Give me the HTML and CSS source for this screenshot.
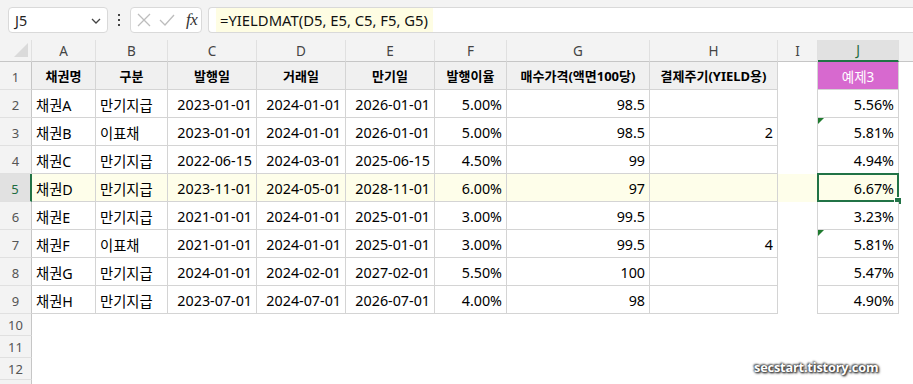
FILE: index.html
```html
<!DOCTYPE html>
<html lang="ko">
<head>
<meta charset="utf-8">
<title>YIELDMAT</title>
<link rel="stylesheet" href="styles.css">
</head>
<body>
<div class="app">
  <div class="fbar">
    <div class="namebox">
      <span>J5</span>
      <svg class="chev" width="10" height="6" viewBox="0 0 10 6"><path d="M1 1 L5 5 L9 1" fill="none" stroke="#444" stroke-width="1.3"/></svg>
    </div>
    <div class="dots"><i></i><i></i><i></i></div>
    <div class="fbtns">
      <svg width="14" height="14" viewBox="0 0 14 14"><path d="M1 1 L13 13 M13 1 L1 13" stroke="#bdbdbd" stroke-width="1.3" fill="none"/></svg>
      <svg width="16" height="12" viewBox="0 0 16 12"><path d="M1 6 L6 11 L15 1" stroke="#bdbdbd" stroke-width="1.3" fill="none"/></svg>
      <span class="fx">fx</span>
    </div>
    <div class="finput"><span class="ftext">=YIELDMAT(D5, E5, C5, F5, G5)</span></div>
  </div>

  <div class="sheet">
    <div class="corner"><svg width="14" height="14" viewBox="0 0 14 14"><path d="M14 0 L14 14 L0 14 Z" fill="#dadada"/></svg></div>
    <div class="ch">A</div><div class="ch">B</div><div class="ch">C</div><div class="ch">D</div><div class="ch">E</div><div class="ch">F</div><div class="ch">G</div><div class="ch">H</div><div class="ch">I</div><div class="ch sel">J</div><div class="ch last"></div>

    <div class="rh">1</div>
    <div class="c h">채권명</div><div class="c h">구분</div><div class="c h">발행일</div><div class="c h">거래일</div><div class="c h">만기일</div><div class="c h">발행이율</div><div class="c h">매수가격(액면100당)</div><div class="c h">결제주기(YIELD용)</div><div class="gap"></div><div class="c ex">예제3</div><div class="e"></div>

    <div class="rh">2</div>
    <div class="c">채권A</div><div class="c">만기지급</div><div class="c r">2023-01-01</div><div class="c r">2024-01-01</div><div class="c r">2026-01-01</div><div class="c r">5.00%</div><div class="c r">98.5</div><div class="c r"></div><div class="gap"></div><div class="c r">5.56%</div><div class="e"></div>

    <div class="rh">3</div>
    <div class="c">채권B</div><div class="c">이표채</div><div class="c r">2023-01-01</div><div class="c r">2024-01-01</div><div class="c r">2026-01-01</div><div class="c r">5.00%</div><div class="c r">98.5</div><div class="c r">2</div><div class="gap"></div><div class="c r tri">5.81%</div><div class="e"></div>

    <div class="rh">4</div>
    <div class="c">채권C</div><div class="c">만기지급</div><div class="c r">2022-06-15</div><div class="c r">2024-03-01</div><div class="c r">2025-06-15</div><div class="c r">4.50%</div><div class="c r">99</div><div class="c r"></div><div class="gap"></div><div class="c r">4.94%</div><div class="e"></div>

    <div class="rh sel">5</div>
    <div class="c y">채권D</div><div class="c y">만기지급</div><div class="c r y">2023-11-01</div><div class="c r y">2024-05-01</div><div class="c r y">2028-11-01</div><div class="c r y">6.00%</div><div class="c r y">97</div><div class="c r y"></div><div class="gap y"></div><div class="c r y active">6.67%</div><div class="e"></div>

    <div class="rh">6</div>
    <div class="c">채권E</div><div class="c">만기지급</div><div class="c r">2021-01-01</div><div class="c r">2024-01-01</div><div class="c r">2025-01-01</div><div class="c r">3.00%</div><div class="c r">99.5</div><div class="c r"></div><div class="gap"></div><div class="c r">3.23%</div><div class="e"></div>

    <div class="rh">7</div>
    <div class="c">채권F</div><div class="c">이표채</div><div class="c r">2021-01-01</div><div class="c r">2024-01-01</div><div class="c r">2025-01-01</div><div class="c r">3.00%</div><div class="c r">99.5</div><div class="c r">4</div><div class="gap"></div><div class="c r tri">5.81%</div><div class="e"></div>

    <div class="rh">8</div>
    <div class="c">채권G</div><div class="c">만기지급</div><div class="c r">2024-01-01</div><div class="c r">2024-02-01</div><div class="c r">2027-02-01</div><div class="c r">5.50%</div><div class="c r">100</div><div class="c r"></div><div class="gap"></div><div class="c r">5.47%</div><div class="e"></div>

    <div class="rh">9</div>
    <div class="c">채권H</div><div class="c">만기지급</div><div class="c r">2023-07-01</div><div class="c r">2024-07-01</div><div class="c r">2026-07-01</div><div class="c r">4.00%</div><div class="c r">98</div><div class="c r"></div><div class="gap"></div><div class="c r">4.90%</div><div class="e"></div>

    <div class="rh short">10</div><div class="blank"></div>
    <div class="rh short">11</div><div class="blank"></div>
    <div class="rh short">12</div><div class="blank"></div>
    <div class="rh short"></div><div class="blank"></div>
  </div>

  <div class="watermark">secstart.tistory.com</div>
</div>
</body>
</html>
```

FILE: styles.css
```css
* { box-sizing: border-box; }
html, body { margin: 0; padding: 0; }
body {
  width: 913px;
  height: 384px;
  overflow: hidden;
  background: #ffffff;
  font-family: "Noto Sans", "Noto Sans CJK KR", sans-serif;
  color: #000;
}
.app { position: relative; width: 913px; height: 384px; background: #f3f3f3; }

/* formula bar */
.fbar {
  height: 33px;
  padding: 7px 0 0 8px;
  display: flex;
  align-items: stretch;
}
.namebox {
  width: 100px;
  background: #fff;
  border: 1px solid #d9d9d9;
  border-radius: 4px;
  display: flex;
  align-items: center;
  justify-content: space-between;
  padding: 0 6px 0 6px;
  font-size: 14.3px;
  color: #222;
}
.chev { margin-top: 1px; }
.dots {
  width: 22px;
  display: flex;
  flex-direction: column;
  align-items: center;
  justify-content: center;
  gap: 3px;
}
.dots i { display: block; width: 2px; height: 2px; background: #444; }
.fbtns {
  width: 72px;
  background: #fff;
  border: 1px solid #d9d9d9;
  border-radius: 4px;
  display: flex;
  align-items: center;
  gap: 8px;
  padding-left: 6px;
}
.fx {
  font-family: "Liberation Serif", "DejaVu Serif", serif;
  font-style: italic;
  font-size: 17px;
  color: #333;
  margin-left: 3px;
  letter-spacing: -0.5px;
}
.finput {
  flex: 1;
  margin-left: 6px;
  background: #fff;
  border: 1px solid #d9d9d9;
  border-right: none;
  border-radius: 4px 0 0 4px;
  display: flex;
  align-items: stretch;
  padding-left: 7px;
}
.ftext {
  background: #fefde3;
  display: flex;
  align-items: center;
  padding: 0 5px 0 4px;
  font-size: 14.8px;
  color: #111;
}

/* sheet */
.sheet {
  margin-top: 7px;
  display: grid;
  grid-template-columns: 32px 64px 72px 89px 89px 89px 72px 143px 128px 40px 81px 1fr;
  grid-template-rows: 22px repeat(9, 28px) repeat(4, 22px);
}
.corner {
  background: #f3f3f3;
  border-right: 1px solid #e0e0e0;
  border-bottom: 1px solid #c6c6c6;
  display: flex;
  align-items: flex-end;
  justify-content: flex-end;
  padding: 0 3px 4px 0;
}
.ch {
  background: #f3f3f3;
  border-right: 1px solid #e0e0e0;
  border-bottom: 1px solid #c6c6c6;
  display: flex;
  align-items: center;
  justify-content: center;
  font-size: 13.5px;
  color: #444;
}
.ch.sel {
  background: #e1e1e1;
  color: #1d6b40;
  border-bottom: 2px solid #217346;
}
.ch.last { border-right: none; }
.rh {
  background: #f3f3f3;
  border-right: 1px solid #c6c6c6;
  border-bottom: 1px solid #e0e0e0;
  display: flex;
  align-items: flex-end;
  justify-content: center;
  padding-bottom: 3px;
  font-size: 13px;
  color: #555;
}
.rh.short { padding-bottom: 1px; }
.rh.sel {
  background: #e1e1e1;
  color: #1d6b40;
  border-right: 2px solid #217346;
}
.c {
  background: #fff;
  border-right: 1px solid #d4d4d4;
  border-bottom: 1px solid #d4d4d4;
  display: flex;
  align-items: center;
  padding: 1px 4px 0 4px;
  font-size: 14.3px;
  white-space: nowrap;
  position: relative;
}
.c.r { justify-content: flex-end; padding-right: 4px; }
.c.h {
  background: #f0f0f0;
  font-weight: 700;
  font-size: 13px;
  justify-content: center;
  padding: 0 2px;
}
.c.ex {
  background: #d769cf;
  color: #fff;
  font-size: 13.5px;
  justify-content: center;
  border-bottom: 1px solid #d4d4d4;
}
.gap {
  background: #fff;
  border-right: 1px solid #d4d4d4;
}
.e { background: #fff; }
.blank { background: #fff; grid-column: 2 / -1; }
.c.y, .gap.y { background: #fefeea; }
.c.active::before {
  content: "";
  position: absolute;
  left: -1px;
  top: -1px;
  right: -1px;
  bottom: -1px;
  border: 2px solid #217346;
}
.c.active::after {
  content: "";
  position: absolute;
  right: -4px;
  bottom: -4px;
  width: 6px;
  height: 6px;
  background: #217346;
  border: 1px solid #fff;
}
.c.tri::before {
  content: "";
  position: absolute;
  left: 0;
  top: 0;
  width: 0;
  height: 0;
  border-top: 6px solid #1f7a2f;
  border-right: 6px solid transparent;
}

.watermark {
  position: absolute;
  left: 754px;
  top: 358px;
  font-family: "Open Sans", "Noto Sans", sans-serif;
  font-weight: 700;
  font-size: 12.8px;
  letter-spacing: -0.2px;
  color: #fff;
  text-shadow: 0 0 2px #333, 1px 1px 2px #333, -1px -1px 2px #555, 1px 1px 3px #666;
}
```
